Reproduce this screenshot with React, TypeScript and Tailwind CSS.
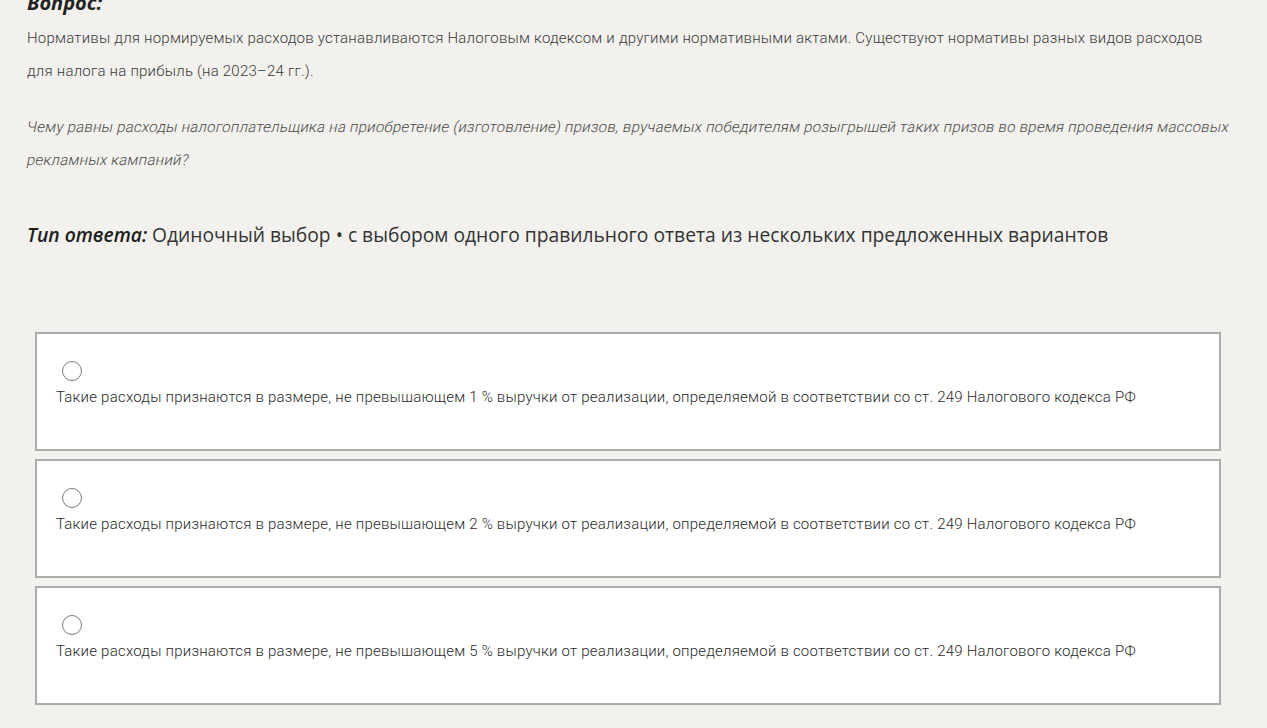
import React from "react";

const options = [
  "Такие расходы признаются в размере, не превышающем 1 % выручки от реализации, определяемой в соответствии со ст. 249 Налогового кодекса РФ",
  "Такие расходы признаются в размере, не превышающем 2 % выручки от реализации, определяемой в соответствии со ст. 249 Налогового кодекса РФ",
  "Такие расходы признаются в размере, не превышающем 5 % выручки от реализации, определяемой в соответствии со ст. 249 Налогового кодекса РФ",
];

const roboto = { fontFamily: "Roboto, sans-serif" };

export default function App() {
  return (
    <div className="min-h-screen bg-[#f2f1ed] overflow-hidden">
      <div className="pl-[27px] pr-[27px]">
        <div
          className="mt-[-12px] text-[20px] leading-[30px] font-bold italic text-[#222]"
          style={{ fontFamily: '"Open Sans", sans-serif' }}
        >
          Вопрос:
        </div>
        <p
          className="mt-[4px] text-[15px] leading-[33px] font-light tracking-[0.22px] text-[#3a3a3a] w-[1192px]"
          style={roboto}
        >
          Нормативы для нормируемых расходов устанавливаются Налоговым кодексом и другими нормативными актами. Существуют нормативы разных видов расходов для налога на прибыль (на 2023–24 гг.).
        </p>
        <div
          className="mt-[23px] text-[15px] leading-[33px] font-light tracking-[0.23px] text-[#4a4a4a]"
          style={roboto}
        >
          <div className="-skew-x-12 origin-left whitespace-nowrap">
            Чему равны расходы налогоплательщика на приобретение (изготовление) призов, вручаемых победителям розыгрышей таких призов во время проведения массовых
          </div>
          <div className="-skew-x-12 origin-left whitespace-nowrap">
            рекламных кампаний?
          </div>
        </div>
        <div
          className="mt-[43px] text-[19.25px] leading-[30px] text-[#333]"
          style={{ fontFamily: '"Open Sans", sans-serif' }}
        >
          <span className="font-semibold italic text-[#1e1e1e]">Тип ответа:</span> Одиночный выбор • с выбором одного правильного ответа из нескольких предложенных вариантов
        </div>
        <div className="mt-[82px] ml-[8px] w-[1186px] flex flex-col gap-[8px]">
          {options.map((t, i) => (
            <div
              key={i}
              className="h-[119px] bg-white border-2 border-[#acacac] pt-[27px] pl-[19px]"
            >
              <div className="ml-[6px] w-[20px] h-[20px] rounded-full border-[1.5px] border-[#7a7a7a] bg-white" />
              <div
                className="mt-[5px] text-[15px] leading-[22px] font-light tracking-[0.22px] text-[#2a2a2a]"
                style={roboto}
              >
                {t}
              </div>
            </div>
          ))}
        </div>
      </div>
    </div>
  );
}
